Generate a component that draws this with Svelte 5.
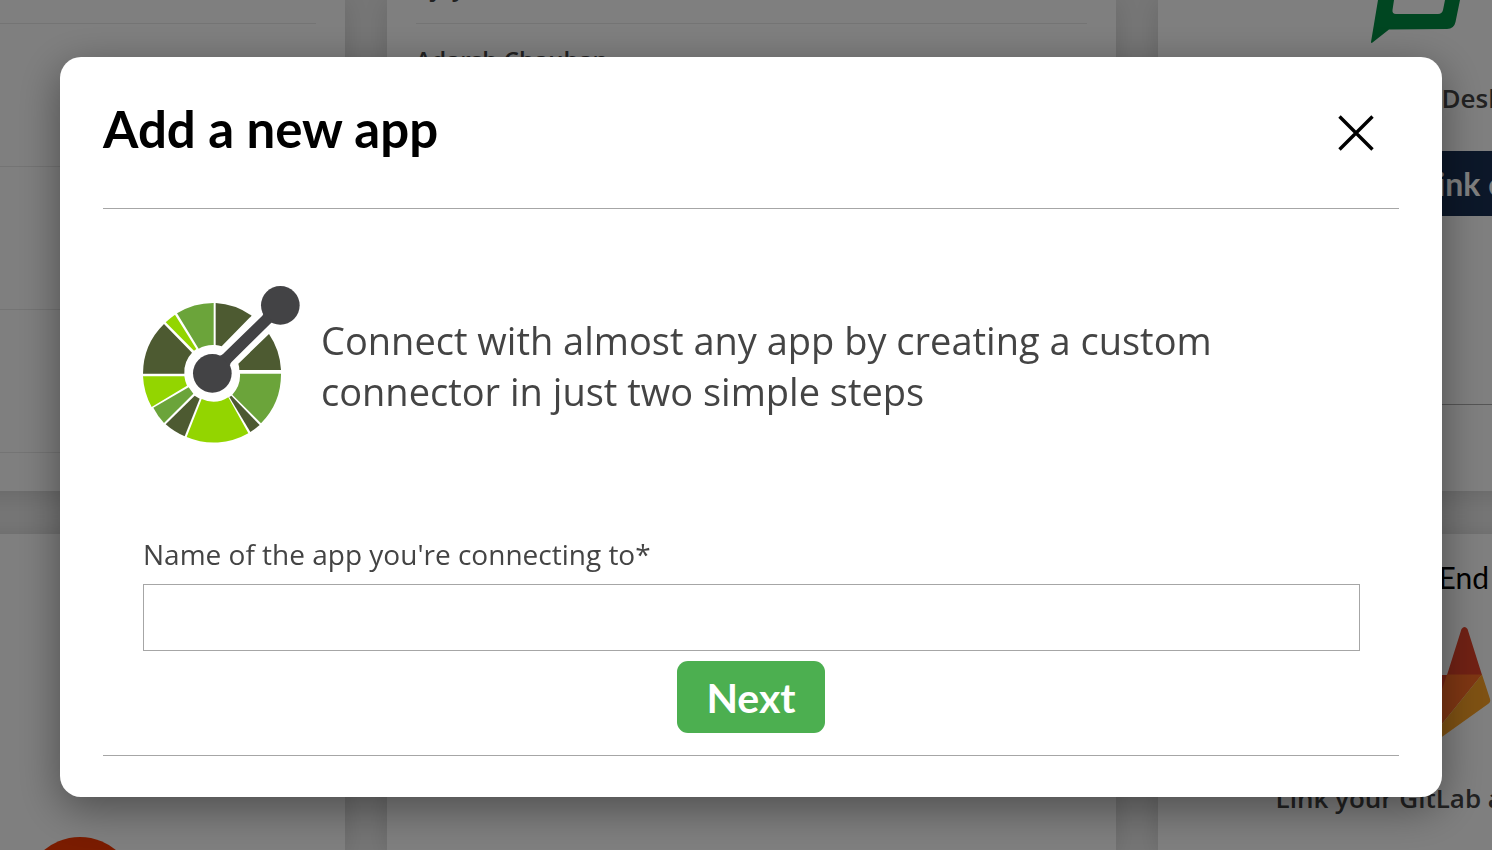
<script>
  let appName = $state('');
</script>

<div class="page" aria-hidden="true">
  <section class="card list">
    <div class="row"></div>
    <div class="row tall"></div>
    <div class="row tall"></div>
    <div class="row tall"></div>
  </section>

  <section class="card list">
    <div class="row person">Ajay</div>
    <div class="person next-person">Adarsh Chauhan</div>
  </section>

  <section class="card service">
    <svg class="desk-logo" viewBox="1358 0 120 44">
      <path fill="#008c42" fill-rule="evenodd" d="M1378 0L1371 42Q1371 43.500 1372.500 42.500L1389 29.500L1447 29Q1454 29 1455.500 22L1460 0ZM1394 0L1445 0L1443 10Q1442 14 1438 14L1396 14Q1392 14 1392.500 10Z" />
    </svg>
    <p class="caption desk">Desk</p>
    <div class="link-button">Link c</div>
    <div class="foot"></div>
  </section>

  <section class="card lower">
    <svg class="dot" viewBox="0 0 112 112"><circle cx="56" cy="56" r="56" fill="#f43800" /></svg>
  </section>

  <section class="card lower"></section>

  <section class="card lower service">
    <h2 class="service-title">End</h2>
    <svg class="gitlab" viewBox="1330 626 162 124">
      <path fill="#e24329" d="M1338 675L1447 675L1461.500 629Q1464.500 625 1467.500 629L1482 675L1420 720Z" />
      <path fill="#fc6d26" d="M1447 674.500L1482 674.500L1425 745L1425 740Z" />
      <path fill="#fca326" d="M1482 674.500L1490 699Q1491 702 1488 704L1425 749L1425 745Z" />
    </svg>
    <p class="caption gitlab-caption">Link your GitLab a</p>
  </section>
</div>

<div class="overlay">
  <div class="modal" role="dialog" aria-modal="true" aria-labelledby="dialog-title">
    <header>
      <h1 id="dialog-title">Add a new app</h1>
      <button class="close" type="button" aria-label="Close">
        <svg viewBox="0 0 36 36"><path d="M1.500 1.500L34.500 34.500M34.500 1.500L1.500 34.500" stroke="#000" stroke-width="3.400" /></svg>
      </button>
    </header>

    <form onsubmit={(e) => e.preventDefault()}>
      <div class="intro">
        <svg class="logo" viewBox="69 48 471 471">
          <g fill="#4d5a31">
            <path d="M287 99A208 209 0 0 1 395 137L305 229A84 84 0 0 0 287 225Z" />
            <path d="M447 192A208 209 0 0 1 483 300L358 300Q358 290 355 281Z" />
            <path d="M419 465A208 209 0 0 1 391 486L328 381L334 377Z" />
            <path d="M194 499A208 209 0 0 1 137 463L224 377L239 386Z" />
            <path d="M69 311A208 209 0 0 1 132 162L216 248A84 84 0 0 0 193 311Z" />
          </g>
          <g fill="#6ba43a">
            <path d="M483 311A208 209 0 0 1 423 460L337 374A84 84 0 0 0 360 311Z" />
            <path d="M132 459A208 209 0 0 1 100 413L206 352L220 371Z" />
            <path d="M171 130A208 209 0 0 1 281 99L281 225A84 84 0 0 0 236 236Z" />
          </g>
          <g fill="#93d500">
            <path d="M385 490A208 209 0 0 1 200 501L245 387A84 84 0 0 0 325 382Z" />
            <path d="M95 411A208 209 0 0 1 69 319L193 319Q195 335 201 347Z" />
            <path d="M137 157A208 209 0 0 1 165 134L229 237L222 242Z" />
          </g>
          <g fill="#434345">
            <circle cx="277" cy="310" r="58" />
            <circle cx="481" cy="106" r="58" />
            <path d="M300 257Q305 256 309 252L427 137Q431 132 431 127L460 156Q455 156 451 161L334 277Q330 281 330 287Z" />
          </g>
        </svg>
        <p>Connect with almost any app by creating a custom connector in just two simple steps</p>
      </div>

      <label for="app-name">Name of the app you're connecting to*</label>
      <input id="app-name" type="text" bind:value={appName} />
      <button class="next" type="submit">Next</button>
    </form>
  </div>
</div>

<style>
  :global(body) {
    margin: 0;
    overflow: hidden;
  }

  * {
    box-sizing: border-box;
  }

  .page {
    height: 100vh;
    overflow: hidden;
    padding-left: 10px;
    display: grid;
    grid-template-columns: repeat(3, calc(50vw - 17px));
    grid-template-rows: 491px 1fr;
    gap: 43px 42px;
    justify-content: center;
    background: #ececec;
    font-family: 'Open Sans', 'Noto Sans', sans-serif;
    color: #444;
  }

  .card {
    background: #fff;
    box-shadow: 0 4px 24px rgba(0, 0, 0, 0.12);
    min-width: 0;
    overflow: hidden;
  }

  .list {
    padding: 0 29px;
  }

  .row {
    height: 24px;
    border-bottom: 1px solid #e8e8e8;
  }

  .row.tall {
    height: 143px;
  }

  .person {
    font-size: 24px;
    font-weight: 600;
    line-height: 36px;
  }

  .row.person {
    display: flex;
    align-items: flex-end;
    padding-bottom: 18px;
  }

  .next-person {
    padding-top: 18px;
  }

  .service {
    display: flex;
    flex-direction: column;
    align-items: flex-start;
  }

  .desk-logo {
    width: 120px;
    height: 44px;
    margin-left: 200px;
  }

  .caption {
    margin: 0;
    font-size: 26px;
    font-weight: 600;
    line-height: 36px;
    white-space: nowrap;
  }

  .desk {
    margin: 36px 0 0 284px;
  }

  .link-button {
    align-self: stretch;
    height: 65px;
    margin: 35px 60px 0 200px;
    padding-left: 63px;
    background: #182f52;
    color: #fff;
    font-family: Lato, sans-serif;
    font-size: 32px;
    font-weight: 700;
    line-height: 66px;
    white-space: nowrap;
  }

  .foot {
    align-self: stretch;
    height: 87px;
    margin-top: auto;
    border-top: 1px solid #aaa;
  }

  .dot {
    display: block;
    width: 112px;
    height: 112px;
    margin: 303px 0 0 408px;
  }

  .service-title {
    margin: 25px 0 0 281px;
    color: #000;
    font-family: Lato, sans-serif;
    font-size: 30px;
    font-weight: 400;
    line-height: 36px;
  }

  .gitlab {
    flex: none;
    width: 162px;
    height: 124px;
    margin: 31px 0 0 172px;
  }

  .gitlab-caption {
    margin: 30px 0 0 118px;
  }

  .overlay {
    position: fixed;
    inset: 0;
    padding: 57px 50px 53px 60px;
    background: rgba(0, 0, 0, 0.5);
  }

  .modal {
    padding: 0 43px 41px;
    border-radius: 21px;
    background: #fff;
    box-shadow: 0 11px 43px rgba(0, 0, 0, 0.4);
  }

  header {
    display: flex;
    align-items: center;
    justify-content: space-between;
    height: 152px;
    padding-right: 25px;
    border-bottom: 1px solid #a6a6a6;
  }

  h1 {
    margin: 0;
    padding-bottom: 7px;
    color: #000;
    font-family: Lato, sans-serif;
    font-size: 51px;
    font-weight: 700;
    line-height: 60px;
  }

  button {
    padding: 0;
    border: 0;
    cursor: pointer;
  }

  .close {
    display: flex;
    background: none;
  }

  .close svg {
    width: 36px;
    height: 36px;
  }

  form {
    display: flex;
    flex-direction: column;
    padding: 77px 39px 22px;
    border-bottom: 1px solid #a6a6a6;
    color: #444;
    font-family: 'Open Sans', 'Noto Sans', sans-serif;
  }

  .intro {
    display: flex;
    align-items: center;
    gap: 21px;
    margin-bottom: 92px;
    padding-left: 1px;
  }

  .logo {
    flex: none;
    width: 157px;
    height: 157px;
  }

  .intro p {
    margin: 0;
    padding-top: 3px;
    font-size: 38px;
    line-height: 51px;
  }

  label {
    padding-left: 1px;
    font-size: 28px;
    line-height: 38px;
  }

  input {
    align-self: stretch;
    height: 67px;
    margin: 11px 0 0 1px;
    padding: 0 20px;
    border: 1px solid #a6a6a6;
    border-radius: 0;
    background: #fff;
    font: inherit;
    font-size: 28px;
  }

  .next {
    align-self: center;
    width: 148px;
    height: 72px;
    margin-top: 10px;
    border-radius: 11px;
    background: #4caf50;
    color: #fff;
    font-family: Lato, sans-serif;
    font-size: 41px;
    font-weight: 700;
  }
</style>
